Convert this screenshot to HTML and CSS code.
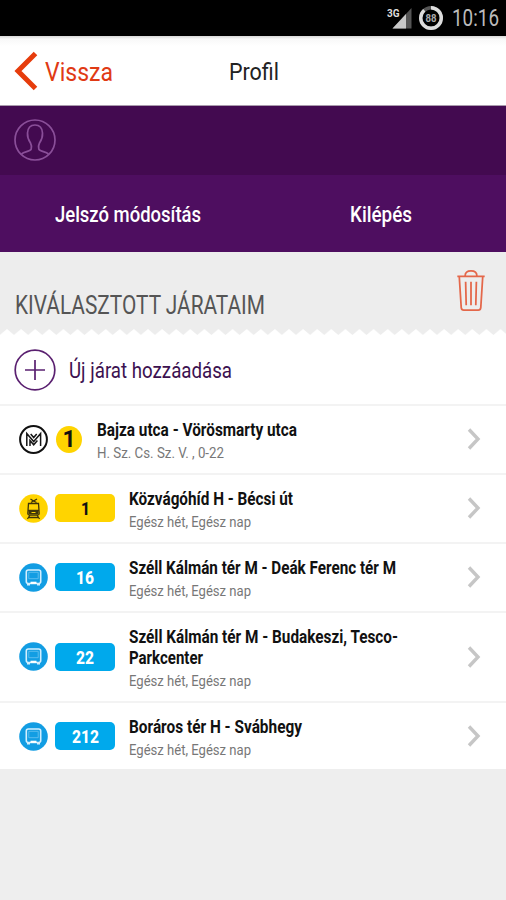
FILE: index.html
```html
<!DOCTYPE html>
<html lang="hu">
<head>
<meta charset="utf-8">
<title>Profil</title>
<link rel="stylesheet" href="styles.css">
</head>
<body>
<svg class="defs" width="0" height="0">
  <symbol id="bus" viewBox="0 0 29 29">
    <circle cx="14.5" cy="14.5" r="14.3" fill="#129de3"/>
    <rect x="7.300" y="7" width="14.400" height="13.500" rx="2" fill="none" stroke="#d3efff" stroke-width="1.600"/>
    <path d="M9.800 9.300h9.400v6.400H9.800z" fill="none" stroke="#6cc4f0" stroke-width=".8"/>
    <path d="M8 21.500h3M18 21.500h3" stroke="#d3efff" stroke-width="2"/>
    <path d="M11.500 19.800h6" stroke="#fff" stroke-width="2.200"/>
  </symbol>
  <symbol id="chevron" viewBox="0 0 16 24">
    <path d="M3 2.500L12 12 3 21.500" fill="none" stroke="#c6c6c6" stroke-width="3.400"/>
  </symbol>
</svg>
<div class="status">
  <svg width="60" height="28" viewBox="0 0 60 28">
    <path d="M6.500 24.500L25.500 4v20.500z" fill="#555"/>
    <path d="M6.500 24.500L20 10v14.500z" fill="#c8c8c8"/>
    <text x="1" y="12.500" class="net">3G</text>
    <circle cx="45" cy="14" r="10.300" fill="none" stroke="#555" stroke-width="3.400"/>
    <circle cx="45" cy="14" r="10.300" fill="none" stroke="#ddd" stroke-width="3.400" stroke-dasharray="57 8" transform="rotate(-90 45 14)"/>
    <text x="45" y="18" class="pct" text-anchor="middle" textLength="11" lengthAdjust="spacingAndGlyphs">88</text>
  </svg>
  <span class="clock fit" data-w="47">10:16</span>
</div>
<header class="top">
  <svg class="back" width="26" height="40" viewBox="0 0 26 40"><path d="M22.500 2.500L5 20l17.500 17.500" fill="none" stroke="#e63c0c" stroke-width="5"/></svg>
  <span class="back-label fit" data-w="68">Vissza</span>
  <h1 class="title"><span class="fit" data-w="50">Profil</span></h1>
</header>
<section class="user">
  <svg width="42" height="42" viewBox="0 0 42 42" fill="none" stroke="#8a4f99" stroke-width="1.700">
    <circle cx="21" cy="21" r="20"/>
    <path d="M7.500 35c3-2.500 9-2.500 9.700-5 .6-2 .3-4-.7-6-2-3-3.300-6-3-10 .3-5 3-8 7.500-8s7.200 3 7.500 8c.3 4-1 7-3 10-1 2-1.300 4-.7 6 .7 2.500 6.700 2.500 9.700 5"/>
  </svg>
</section>
<nav class="actions">
  <div><span class="fit" data-w="146">Jelszó módosítás</span></div>
  <div><span class="fit" data-w="62">Kilépés</span></div>
</nav>
<section class="heading">
  <h2><span class="fit" data-w="250">KIVÁLASZTOTT JÁRATAIM</span></h2>
  <svg class="trash" width="30" height="43" viewBox="0 0 30 44" fill="none" stroke="#e4674a" stroke-width="1.800">
    <path d="M1 7.500h28M9 7c0-3.500 2-5 6-5s6 1.500 6 5M3 8l2 31.500q.3 2.500 2.500 2.500h15q2.200 0 2.500-2.500L27 8M9.500 13l.6 24M15 13v24M20.500 13l-.6 24"/>
  </svg>
</section>
<svg class="zigzag" width="506" height="6"><defs><pattern id="teeth" width="14.100" height="6" patternUnits="userSpaceOnUse" x="7"><path d="M0 0h14.100L7 6z" fill="#ededed"/></pattern></defs><rect width="506" height="6" fill="url(#teeth)"/></svg>
<div class="add">
  <svg width="42" height="42" viewBox="0 0 42 42" fill="none" stroke="#5a2070" stroke-width="1.700"><circle cx="21" cy="21" r="19.800"/><path d="M11 21h20M21 11v20"/></svg>
  <span class="fit" data-w="163">Új járat hozzáadása</span>
</div>
<ul class="lines">
  <li>
    <svg class="mode" viewBox="0 0 29 29"><circle cx="14.500" cy="14.500" r="13.400" fill="#fff" stroke="#111" stroke-width="2"/><path d="M7.800 21V8.500l6.900 8 6.900-8V21M11 21v-5.500l3.700 4.300 3.700-4.300M11.700 9l3 3.500 3-3.500" fill="none" stroke="#151515" stroke-width="1.500"/></svg>
    <b class="round"><span>1</span></b>
    <div class="text"><p class="name"><span class="fit" data-w="200">Bajza utca - Vörösmarty utca</span></p><p class="when"><span class="fit" data-w="127">H. Sz. Cs. Sz. V. , 0-22</span></p></div>
    <svg class="next"><use href="#chevron"/></svg>
  </li>
  <li>
    <svg class="mode" viewBox="0 0 29 29"><circle cx="14.500" cy="14.500" r="14.300" fill="#ffd400"/><g fill="none" stroke="#3f3509" stroke-width="1.300"><path d="M11.500 5l3 2 3.500-2M12 8.500l2.500-1.500 3 1.500"/><path d="M9.500 9.500h10l.7 10q0 1.500-1.500 1.500h-8.400q-1.500 0-1.500-1.500zM9.500 16.500h10.200M11 21l-2.500 4M18 21l2.500 4M10 23.500h9"/></g><path d="M9.500 16.500h10V20h-10z" fill="#3f3509"/><path d="M12.500 18.500h4" stroke="#ffd400"/></svg>
    <b class="pill yellow"><span>1</span></b>
    <div class="text"><p class="name"><span class="fit" data-w="164">Közvágóhíd H - Bécsi út</span></p><p class="when"><span class="fit" data-w="122">Egész hét, Egész nap</span></p></div>
    <svg class="next"><use href="#chevron"/></svg>
  </li>
  <li>
    <svg class="mode"><use href="#bus"/></svg>
    <b class="pill"><span>16</span></b>
    <div class="text"><p class="name"><span class="fit" data-w="267">Széll Kálmán tér M - Deák Ferenc tér M</span></p><p class="when"><span class="fit" data-w="122">Egész hét, Egész nap</span></p></div>
    <svg class="next"><use href="#chevron"/></svg>
  </li>
  <li class="tall">
    <svg class="mode"><use href="#bus"/></svg>
    <b class="pill"><span>22</span></b>
    <div class="text"><p class="name"><span class="fit" data-w="269">Széll Kálmán tér M - Budakeszi, Tesco-</span><br><span class="fit" data-w="74">Parkcenter</span></p><p class="when"><span class="fit" data-w="122">Egész hét, Egész nap</span></p></div>
    <svg class="next"><use href="#chevron"/></svg>
  </li>
  <li>
    <svg class="mode"><use href="#bus"/></svg>
    <b class="pill"><span>212</span></b>
    <div class="text"><p class="name"><span class="fit" data-w="173">Boráros tér H - Svábhegy</span></p><p class="when"><span class="fit" data-w="122">Egész hét, Egész nap</span></p></div>
    <svg class="next"><use href="#chevron"/></svg>
  </li>
</ul>
<script src="fit.js"></script>
</body>
</html>
```
FILE: styles.css
```css
* { box-sizing: border-box; margin: 0; padding: 0; }
body { width: 506px; height: 900px; overflow: hidden; background: #eee; font-family: Roboto, "Liberation Sans", sans-serif; }
.defs { display: none; }
svg { display: block; flex: none; }
.fit { display: inline-block; white-space: nowrap; transform-origin: 0 50%; }
.status { height: 36px; background: #000; display: flex; align-items: center; padding-left: 386px; }
.net { font-size: 10px; font-weight: 700; fill: #ddd; stroke: #000; stroke-width: 2px; paint-order: stroke; }
.pct { font-size: 11px; font-weight: 700; fill: #aaa; }
.clock { margin-left: 6px; color: #bbb; font-size: 23px; line-height: 36px; padding-top: 2px; }
.top { height: 70px; background: linear-gradient(#d8d8d8, #f8f8f8 3px, #fff 10px); border-bottom: 1px solid #a99bad; display: flex; align-items: center; padding-left: 13px; }
.back-label { margin-left: 6px; color: #e03a14; font-size: 26px; line-height: 36px; padding-top: 2px; }
.title { margin-left: auto; width: 277px; font-size: 24px; font-weight: 400; line-height: 36px; color: #222; padding-top: 2px; }
.user { height: 69px; background: #430a50; padding: 13px 14px; }
.actions { height: 77px; background: #4e0e60; display: flex; align-items: center; color: #fff; font-size: 22px; font-weight: 500; line-height: 30px; padding-top: 2px; }
.actions div { flex: 1; display: flex; justify-content: center; padding-left: 3px; }
.heading { height: 77px; background: #ededed; display: flex; justify-content: space-between; padding: 17px 20px 0 15px; }
.heading h2 { font-size: 25px; font-weight: 400; color: #555; line-height: 30px; padding-top: 22px; }
.zigzag { background: #fff; }
.add { height: 69px; background: #fff; display: flex; align-items: center; padding: 0 14px; gap: 13px; color: #3c1150; font-size: 22px; line-height: 30px; }
.add .fit { padding-top: 3px; }
.lines { list-style: none; }
.lines li { height: 69px; background: #fff; border-top: 2px solid #f3f3f3; display: flex; align-items: center; padding: 0 24px 1px 19px; }
.lines .tall { height: 90px; }
.lines li:last-child { height: 68px; padding-bottom: 0; }
.mode { width: 29px; height: 29px; }
.round { width: 26px; height: 27px; border-radius: 50%; margin-left: 8px; background: #ffd400; color: #111; font-size: 23px; font-weight: 700; line-height: 27px; text-align: center; margin-right: 15px; }
.pill { width: 60px; height: 28px; border-radius: 5px; margin-left: 7px; margin-right: 14px; background: #00a9ec; color: #fff; font-size: 19px; font-weight: 800; line-height: 30px; text-align: center; }
.pill span { display: inline-block; transform: scaleX(.82); }
.yellow { background: #ffd400; color: #111; }
.text { flex: 1; min-width: 0; padding-top: 4px; }
.name { font-size: 18px; font-weight: 700; line-height: 21px; color: #111; }
.when { font-size: 15.5px; line-height: 21px; color: #777; padding-top: 3px; height: 24px; }
.next { width: 16px; height: 24px; }
```
FILE: fit.js
```js
// Condense each label to its design width without changing its height.
document.querySelectorAll('.fit').forEach(function (el) {
  var w = Number(el.dataset.w);
  var natural = el.getBoundingClientRect().width;
  el.style.transform = 'scaleX(' + w / natural + ')';
  el.style.marginRight = (w - natural) + 'px';
});
```
